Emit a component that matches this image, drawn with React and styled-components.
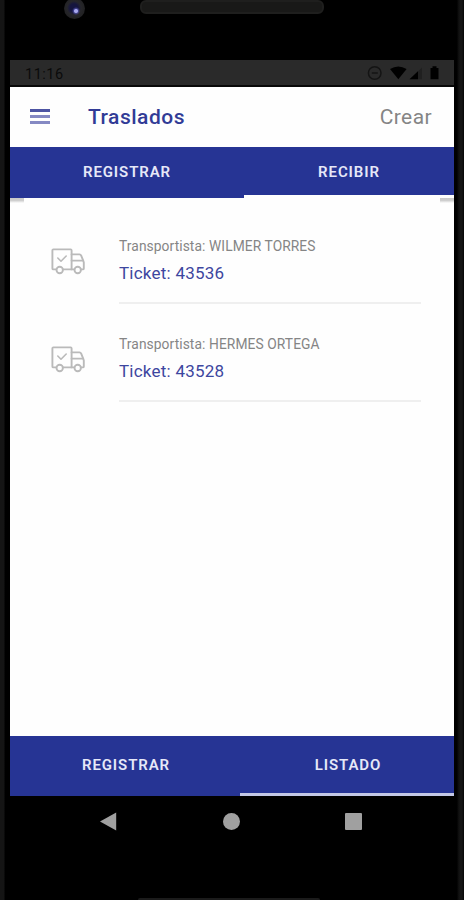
import React, { useState } from "react";
import styled, { createGlobalStyle } from "styled-components";

const tickets = [
  { id: 43536, carrier: "WILMER TORRES" },
  { id: 43528, carrier: "HERMES ORTEGA" },
];

const TruckIcon = () => (
  <svg width="34" height="27" viewBox="0 0 34 27" fill="none" stroke="#bababa" strokeWidth="1.9" strokeLinejoin="round" strokeLinecap="round">
    <path d="M5 21.4H2.4a1 1 0 0 1-1-1V2.4a1 1 0 0 1 1-1h17.2a1 1 0 0 1 1 1v19H12.4" />
    <path d="M20.6 6.4h7.6a2 2 0 0 1 2 1.2l2 5 .6 2v5.8a1 1 0 0 1-1 1h-1.4" />
    <path d="M20.6 12.6h11.4M20.6 21.4h2.4" />
    <path d="m6.8 10 3.2 3.2 5.2-5.2" strokeWidth="1.6" />
    <circle cx="8.7" cy="22" r="3.2" />
    <circle cx="26.7" cy="22" r="3.2" />
  </svg>
);

const StatusIcons = () => (
  <svg width="74" height="16" viewBox="0 0 74 16">
    <circle cx="7.7" cy="8" r="6.3" fill="none" stroke="#141414" strokeWidth="1.5" />
    <path d="M4.8 8h6" stroke="#141414" strokeWidth="1.5" />
    <path d="M23 4Q31.3 -1 39.6 4L31.3 14.2Z" fill="#000" />
    <path d="M43 14.2 55 2.5v11.7Z" fill="#202020" />
    <path d="M42.5 14.2l8.5-8V14.2Z" fill="#000" />
    <path d="M63.5 3h2V1.3h4V3h2v11.3h-8Z" fill="#000" />
  </svg>
);

const Tabs = ({ items, active, onSelect, bottom }) => (
  <TabBar $bottom={bottom}>
    {items.map((item, i) => (
      <Tab key={item} $bottom={bottom} $active={active === i} onClick={() => onSelect(i)}>
        {item}
      </Tab>
    ))}
  </TabBar>
);

const App = () => {
  const [topTab, setTopTab] = useState(1);
  const [bottomTab, setBottomTab] = useState(1);

  return (
    <>
      <GlobalStyle />
      <Phone>
        <Bezel>
          <Camera />
          <Speaker />
        </Bezel>
        <StatusBar>
          <span>11:16</span>
          <StatusIcons />
        </StatusBar>
        <Screen>
          <Header>
            <MenuButton aria-label="Menu">
              <i />
              <i />
              <i />
            </MenuButton>
            <Title>Traslados</Title>
            <Create>Crear</Create>
          </Header>
          <Tabs items={["REGISTRAR", "RECIBIR"]} active={topTab} onSelect={setTopTab} />
          <Shadow>
            <i />
            <i />
          </Shadow>
          <List>
            {tickets.map(({ id, carrier }) => (
              <Row key={id}>
                <TruckIcon />
                <Info>
                  <Carrier>Transportista: {carrier}</Carrier>
                  <Ticket>Ticket: {id}</Ticket>
                </Info>
              </Row>
            ))}
          </List>
          <Tabs bottom items={["REGISTRAR", "LISTADO"]} active={bottomTab} onSelect={setBottomTab} />
        </Screen>
        <NavBar>
          <svg width="17" height="19" viewBox="0 0 17 19">
            <path d="M0 9.5 16.2 0.5v18Z" fill="#a0a0a0" />
          </svg>
          <Home />
          <Recent />
        </NavBar>
        <BottomSpeaker />
      </Phone>
    </>
  );
};

export default App;

const GlobalStyle = createGlobalStyle`
  * {
    box-sizing: border-box;
  }
  body {
    margin: 0;
    background-color: #000000;
    font-family: Roboto, "Liberation Sans", sans-serif;
  }
  button {
    padding: 0;
    border: 0;
    background: none;
    font-family: inherit;
  }
`;

const Phone = styled.div`
  display: flex;
  flex-direction: column;
  width: 464px;
  height: 900px;
  padding: 0 10px;
  overflow: hidden;
  background: linear-gradient(
    to right,
    #151515 0 4px,
    #000000 5px 457px,
    #0b0b0b 458px,
    #151515 460px 462px,
    #050505 464px
  );
`;

const Bezel = styled.div`
  display: flex;
  align-items: flex-start;
  height: 60px;
  padding-left: 54px;
`;

const Camera = styled.div`
  width: 21px;
  height: 21px;
  margin-top: -2px;
  border-radius: 50%;
  background:
    radial-gradient(circle at 12px 13px, #a8a8ee 0 1.5px, rgba(90, 90, 190, 0.6) 2.5px, transparent 4px),
    radial-gradient(circle at 10px 10px, #15153f 0 4px, #26262a 7px, #222224 10px);
`;

const Speaker = styled.div`
  width: 184px;
  height: 14px;
  margin-left: 55px;
  border: 2px solid #1f1f1e;
  border-radius: 6px;
  background-color: #191918;
`;

const StatusBar = styled.div`
  display: flex;
  align-items: center;
  justify-content: space-between;
  height: 27px;
  padding: 1px 13px 0 15px;
  border-bottom: 2px solid #080808;
  background-color: #2a2a2a;
  color: #0a0a0a;
  font-size: 14.5px;
  letter-spacing: 0.5px;
  span {
    padding-top: 2px;
  }
`;

const Screen = styled.div`
  display: flex;
  flex-direction: column;
  height: 709px;
  background-color: #fefefe;
`;

const Header = styled.div`
  display: flex;
  align-items: center;
  height: 60px;
  padding: 0 22px 0 20px;
`;

const MenuButton = styled.button`
  display: flex;
  flex-direction: column;
  gap: 3px;
  width: 20px;
  margin-top: -1px;
  i {
    height: 3px;
    background-color: #8589c3;
  }
  i:first-child {
    background-color: #4d54a3;
  }
`;

const Title = styled.div`
  margin-left: 38px;
  flex: 1;
  color: #313b96;
  font-size: 21px;
  font-weight: 500;
  letter-spacing: 0.5px;
`;

const Create = styled.button`
  color: #858585;
  font-size: 21px;
  letter-spacing: 0.4px;
`;

const TabBar = styled.div`
  display: grid;
  grid-template-columns: ${({ $bottom }) => ($bottom ? "230px 214px" : "234px 210px")};
  height: ${({ $bottom }) => ($bottom ? "60px" : "51px")};
  flex-shrink: 0;
  background-color: #263494;
`;

const Tab = styled.button`
  padding: ${({ $bottom }) => ($bottom ? "1px 0 0 2px" : "1px 0 0 0")};
  border-bottom: 3px solid
    ${({ $active, $bottom }) => ($active ? ($bottom ? "#c3c8e6" : "#fefefe") : "transparent")};
  color: #e6e8f8;
  font-size: 15px;
  font-weight: 600;
  letter-spacing: 0.9px;
`;

const Shadow = styled.div`
  display: flex;
  justify-content: space-between;
  height: 5px;
  i {
    width: 14px;
    background: linear-gradient(#c8c8c8, #cfcfcf 50%, #fefefe);
  }
`;

const List = styled.div`
  flex: 1;
  padding: 3px 33px 0 41px;
`;

const Row = styled.div`
  display: flex;
  align-items: flex-start;
  height: 98px;
  svg {
    margin-top: 42px;
  }
`;

const Info = styled.div`
  flex: 1;
  height: 98px;
  margin-left: 34px;
  padding-top: 31px;
  border-bottom: 2px solid #efefef;
`;

const Carrier = styled.div`
  color: #858585;
  font-size: 13.8px;
  line-height: 18px;
  letter-spacing: 0.08px;
`;

const Ticket = styled.div`
  margin-top: 6px;
  color: #3d469f;
  font-size: 17px;
  line-height: 24px;
  letter-spacing: 0.23px;
`;

const NavBar = styled.div`
  display: flex;
  align-items: center;
  justify-content: space-between;
  height: 50px;
  padding: 0 92px 0 90px;
`;

const Home = styled.div`
  width: 17px;
  height: 17px;
  border-radius: 50%;
  background-color: #a0a0a0;
`;

const Recent = styled.div`
  width: 17px;
  height: 17px;
  border-radius: 1px;
  background-color: #a0a0a0;
`;

const BottomSpeaker = styled.div`
  width: 182px;
  height: 2px;
  margin: auto 0 0 128px;
  border-radius: 2px 2px 0 0;
  background-color: #1b1b1b;
`;
